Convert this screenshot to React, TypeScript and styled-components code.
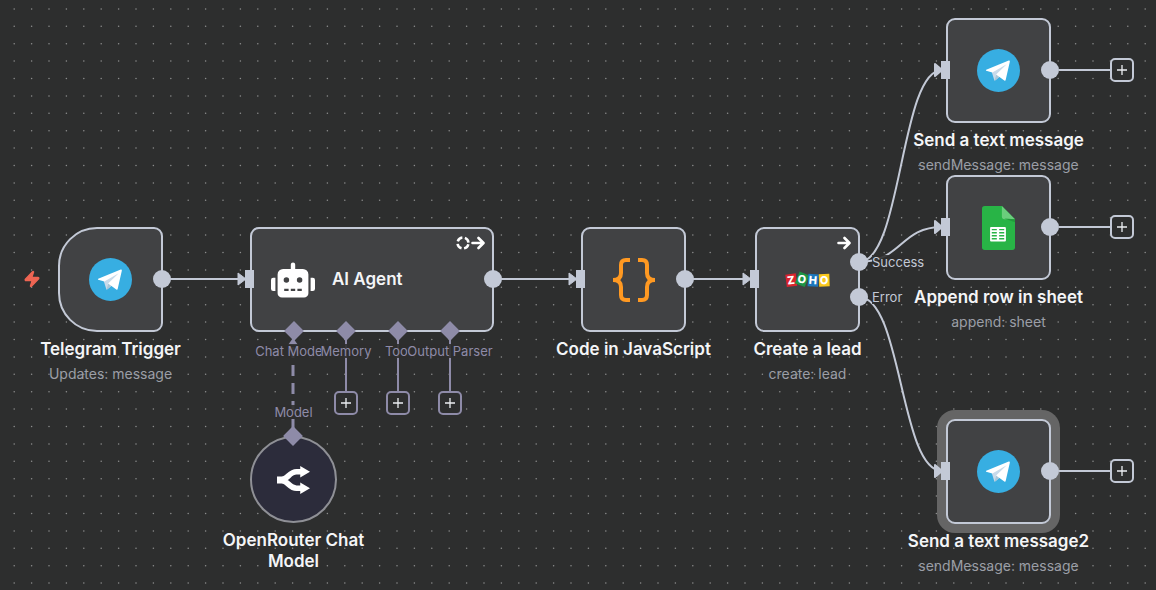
import React from "react";
import styled, { createGlobalStyle, css } from "styled-components";
import { FaRobot } from "react-icons/fa";
import { Zap } from "lucide-react";

const color = {
  canvas: "#2d2e2e",
  node: "#414244",
  line: "#c3c9d6",
  sub: "#8e8ba8",
  title: "#f4f5f7",
  subtitle: "#9b9ea6",
};

const GlobalStyle = createGlobalStyle`
  * { box-sizing: border-box; }
  body {
    margin: 0;
    background: ${color.canvas};
    font-family: Inter, "Liberation Sans", sans-serif;
  }
`;

const Canvas = styled.main`
  position: relative;
  min-height: 100vh;
  overflow: hidden;
  background: ${color.canvas};
`;

const Layer = styled.svg`
  position: absolute;
  inset: 0;
  width: 100%;
  height: 100%;
`;

/* A node's place on the free canvas */
const Node = styled.section<{ $x: number; $y: number; $w?: number }>`
  position: absolute;
  left: ${(p) => p.$x}px;
  top: ${(p) => p.$y}px;
  width: ${(p) => p.$w ?? 105}px;
  display: flex;
  flex-direction: column;
  align-items: center;
`;

type Shape = "box" | "trigger" | "circle";

const Body = styled.div<{ $shape?: Shape; $selected?: boolean; $wide?: boolean }>`
  position: relative;
  display: flex;
  align-items: center;
  justify-content: center;
  width: 100%;
  height: 105px;
  background: ${color.node};
  border: 2px solid ${color.line};
  border-radius: 9px;
  ${(p) => p.$shape === "trigger" && css`border-radius: 39px 9px 9px 39px;`}
  ${(p) =>
    p.$shape === "circle" &&
    css`
      height: 87px;
      border-radius: 50%;
      border-color: #8f9096;
      background: #2c2c3b;
    `}
  ${(p) => p.$selected && css`box-shadow: 0 0 0 9px #656565;`}
  ${(p) =>
    p.$wide &&
    css`
      justify-content: flex-start;
      gap: 17px;
      padding-left: 19px;
    `}
`;

const Caption = styled.div`
  flex: none;
  width: 190px;
  margin-top: 7px;
  display: flex;
  flex-direction: column;
  gap: 5px;
  text-align: center;
`;

const Title = styled.h2`
  margin: 0;
  color: ${color.title};
  font-size: 17px;
  line-height: 21px;
  font-weight: 600;
`;

const Subtitle = styled.p`
  margin: 0;
  color: ${color.subtitle};
  font-size: 14px;
  line-height: 18px;
`;

/* Input handle, on the left border */
const Input = styled.i`
  position: absolute;
  left: -7px;
  top: 41px;
  width: 9px;
  height: 18px;
  background: ${color.line};
`;

/* Column of output handles over the right border */
const Outputs = styled.div`
  position: absolute;
  left: calc(100% - 8px);
  top: 0;
  height: 100px;
  display: flex;
  flex-direction: column;
  justify-content: center;
  gap: 17px;
`;

const Output = styled.div`
  display: flex;
  align-items: center;
  height: 18px;
`;

const Dot = styled.i`
  flex: none;
  width: 18px;
  height: 18px;
  border-radius: 50%;
  background: ${color.line};
`;

const Tail = styled.i`
  width: 51px;
  height: 2px;
  background: ${color.line};
`;

const Label = styled.span<{ $kind?: "main" | "required" }>`
  color: ${(p) => (p.$kind === "main" ? color.line : color.sub)};
  background: rgba(45, 46, 46, 0.9);
  font-size: 13px;
  line-height: 14px;
  white-space: nowrap;
  ${(p) => p.$kind === "main" && css`margin-left: 4px;`}
  ${(p) => p.$kind === "required" && css`padding-right: 7px;`}
`;

const Diamond = styled.i`
  flex: none;
  width: 14px;
  height: 14px;
  transform: rotate(45deg);
  background: ${color.sub};
`;

/* Row of sub-node ports hanging from the bottom border */
const Ports = styled.div`
  position: absolute;
  left: 16px;
  top: 95px;
  display: grid;
  grid-template-columns: repeat(4, 52px);
`;

const Port = styled.div`
  display: flex;
  flex-direction: column;
  align-items: center;
  min-width: 0;
  gap: 6px;
`;

const TopPort = styled.div`
  position: absolute;
  bottom: calc(100% - 5px);
  display: flex;
  flex-direction: column;
  align-items: center;
  gap: 10px;
`;

const AddButton = styled.button<{ $sub?: boolean }>`
  flex: none;
  width: 24px;
  height: 24px;
  padding: 0;
  display: flex;
  align-items: center;
  justify-content: center;
  color: #eceef2;
  background: ${color.canvas};
  border: 2px solid ${(p) => (p.$sub ? color.sub : color.line)};
  border-radius: 5px;
  ${(p) => p.$sub && css`margin-top: 27px;`}
`;

const Corner = styled.div`
  position: absolute;
  top: 7px;
  right: 7px;
  display: flex;
  gap: 1px;
`;

const TriggerMark = styled.div`
  position: absolute;
  right: calc(100% + 19px);
  display: flex;
  padding-bottom: 2px;
`;

const Telegram = () => (
  <svg width="43" height="43" viewBox="0 0 126 126" aria-label="Telegram">
    <circle cx="63" cy="63" r="63" fill="#37aee2" />
    <path d="M43 67 L51 92 Q53 93 55 91 L66 81 L96 35 Z" fill="#c8daea" />
    <path d="M51 92 Q53 93 55 91 L66 81 L57 75 Z" fill="#a9c6d8" />
    <path
      d="M27 61 L93 34 Q97 33 96 38 L84 91 Q83 94 80 92 L56 75 L87 45 L45 69 L27 64 Q25 62 27 61 Z"
      fill="#fff"
    />
  </svg>
);

const Braces = () => (
  <svg width="44" height="44" viewBox="0 0 44 44" fill="none" stroke="#ff9922" strokeWidth="4" aria-label="Code">
    <path d="M18 2 H14 Q9 2 9 7 V15 Q9 22 1 22 Q9 22 9 29 V37 Q9 42 14 42 H18" />
    <path d="M26 2 H30 Q35 2 35 7 V15 Q35 22 43 22 Q35 22 35 29 V37 Q35 42 30 42 H26" />
  </svg>
);

const tiles = [
  { x: 6, y: 9, r: -7, fill: "#d9232e", letter: "Z" },
  { x: 17, y: 8, r: 22, fill: "#1d9445", letter: "O" },
  { x: 28, y: 9, r: 4, fill: "#1c77bd", letter: "H" },
  { x: 39, y: 9, r: -2, fill: "#fbc91d", letter: "O" },
];

const Zoho = () => (
  <svg width="46" height="18" viewBox="0 0 46 18" aria-label="Zoho">
    {tiles.map((t, i) => (
      <g key={i} transform={`translate(${t.x} ${t.y}) rotate(${t.r})`}>
        <rect x="-5" y="-6" width="10.500" height="12.500" fill={t.fill} />
        <text
          y="4"
          fill="#fff"
          fontSize="11"
          fontWeight="800"
          textAnchor="middle"
          transform={t.r > 10 ? "rotate(-12)" : undefined}
        >
          {t.letter}
        </text>
      </g>
    ))}
  </svg>
);

const Sheets = () => (
  <svg width="33" height="44" viewBox="0 0 98 130" aria-label="Google Sheets">
    <path d="M8 0 H59 L98 39 V122 Q98 130 90 130 H8 Q0 130 0 122 V8 Q0 0 8 0 Z" fill="#28b446" />
    <path d="M59 0 L98 39 H67 Q59 39 59 31 Z" fill="#6ace7c" />
    <path d="M66 37 L98 48 V39 Z" fill="#219b3b" />
    <rect x="24" y="62" width="47" height="43" rx="3" fill="#fff" />
    <path d="M29 70 H44 M51 70 H66 M29 79 H44 M51 79 H66 M29 88 H44 M51 88 H66 M29 97 H44 M51 97 H66" stroke="#28b446" strokeWidth="4" />
  </svg>
);

const Router = () => (
  <svg width="33" height="28" viewBox="0 0 98 83" aria-label="OpenRouter">
    <path
      d="M0 41.500 H10 C32 41 36 17 58 17 H72 M10 41.500 C32 42 36 66 58 66 H72"
      fill="none"
      stroke="#fff"
      strokeWidth="17"
    />
    <path d="M0 31 H22 V52 H0 Z M69 0 L98 17 L69 34 Z M69 49 L98 66 L69 83 Z" fill="#fff" />
  </svg>
);

const ArrowMark = () => (
  <svg width="14" height="14" viewBox="0 0 14 14" fill="none" stroke="#fff" strokeWidth="2.600" strokeLinecap="round" strokeLinejoin="round">
    <path d="M1.500 7 H12 M7.500 2 L12.500 7 L7.500 12" />
  </svg>
);

const RetryMark = () => (
  <svg width="14" height="14" viewBox="0 0 14 14" fill="none" stroke="#fff" strokeWidth="2.500">
    <circle cx="7" cy="7" r="5.500" strokeDasharray="6 2.640" strokeDashoffset="-1.300" />
  </svg>
);

const PlusMark = () => (
  <svg width="12" height="12" viewBox="0 0 12 12" stroke="currentColor" strokeWidth="1.300">
    <path d="M6 1 V11 M1 6 H11" />
  </svg>
);

const dotSteps = [0, 1, 2, 3, 4];

const Edges = () => (
  <Layer aria-hidden="true">
    <defs>
      <pattern id="dots" x="5" y="0" width="87" height="87" patternUnits="userSpaceOnUse">
        {dotSteps.map((r) =>
          dotSteps.map((c) => (
            <circle key={`${r}-${c}`} cx={9.2 + c * 17.4} cy={8.9 + r * 17.4} r="0.750" fill="#8d8e8e" />
          )),
        )}
      </pattern>
      <marker id="arrow" viewBox="0 0 9 14" refX="8" refY="7" markerWidth="9" markerHeight="14" markerUnits="userSpaceOnUse">
        <path d="M1 1 L9 7 L1 13 Z" fill={color.line} stroke={color.line} strokeLinejoin="round" />
      </marker>
    </defs>
    <rect width="100%" height="100%" fill="url(#dots)" />
    <g fill="none" stroke={color.line} strokeWidth="2">
      <path d="M163 279 H245" markerEnd="url(#arrow)" />
      <path d="M493 279 H576" markerEnd="url(#arrow)" />
      <path d="M685 279 H750" markerEnd="url(#arrow)" />
      <path d="M859 262 C902 262 900 70 942 70" />
      <path d="M859 262 C902 262 900 227 942 227" />
      <path d="M859 297 C902 297 900 471 942 471" />
    </g>
    <g stroke={color.sub} strokeWidth="2">
      <path d="M346 336 V392 M398 336 V392 M450 336 V392" />
      <path d="M293 347 V436" strokeDasharray="11 7" strokeWidth="3" />
      <path d="M288 345 L293 338 L298 345 Z" fill={color.sub} stroke="none" />
    </g>
  </Layer>
);

const ArrowHeads = () => (
  <Layer aria-hidden="true" pointerEvents="none">
    {[70, 227, 471].map((y) => (
      <path key={y} d={`M935 ${y - 6} L942 ${y} L935 ${y + 6} Z`} fill={color.line} stroke={color.line} strokeLinejoin="round" strokeWidth="2" />
    ))}
  </Layer>
);

const NodeCaption = ({ title, subtitle }: { title: string; subtitle?: string }) => (
  <Caption>
    <Title>{title}</Title>
    {subtitle && <Subtitle>{subtitle}</Subtitle>}
  </Caption>
);

const NodeOutputs = ({ labels = [""] }: { labels?: string[] }) => (
  <Outputs>
    {labels.map((label) => (
      <Output key={label}>
        <Dot />
        {label && <Label $kind="main">{label}</Label>}
      </Output>
    ))}
  </Outputs>
);

const ports = [
  { label: "Chat Model", connected: true },
  { label: "Memory" },
  { label: "Tool" },
  { label: "Output Parser" },
];

const actions = [
  { y: 18, title: "Send a text message", subtitle: "sendMessage: message", icon: <Telegram /> },
  { y: 175, title: "Append row in sheet", subtitle: "append: sheet", icon: <Sheets /> },
  { y: 419, title: "Send a text message2", subtitle: "sendMessage: message", icon: <Telegram />, selected: true },
];

export default function App() {
  return (
    <>
      <GlobalStyle />
      <Canvas>
        <Edges />

        <Node $x={58} $y={227}>
          <Body $shape="trigger">
            <TriggerMark>
              <Zap size={18} color="#ee6553" fill="#ee6553" />
            </TriggerMark>
            <Telegram />
            <NodeOutputs />
          </Body>
          <NodeCaption title="Telegram Trigger" subtitle="Updates: message" />
        </Node>

        <Node $x={250} $y={227} $w={244}>
          <Body $wide>
            <Input />
            <FaRobot size={44} color="#fff" />
            <Title>AI Agent</Title>
            <Corner>
              <RetryMark />
              <ArrowMark />
            </Corner>
            <NodeOutputs />
            <Ports>
              {ports.map((p) => (
                <Port key={p.label}>
                  <Diamond />
                  <Label $kind={p.connected ? "required" : undefined}>{p.label}</Label>
                  {!p.connected && (
                    <AddButton $sub aria-label={`Add ${p.label}`}>
                      <PlusMark />
                    </AddButton>
                  )}
                </Port>
              ))}
            </Ports>
          </Body>
        </Node>

        <Node $x={250} $y={436} $w={87}>
          <Body $shape="circle">
            <Router />
            <TopPort>
              <Label>Model</Label>
              <Diamond />
            </TopPort>
          </Body>
          <NodeCaption title="OpenRouter Chat Model" />
        </Node>

        <Node $x={581} $y={227}>
          <Body>
            <Input />
            <Braces />
            <NodeOutputs />
          </Body>
          <NodeCaption title="Code in JavaScript" />
        </Node>

        <Node $x={755} $y={227}>
          <Body>
            <Input />
            <Zoho />
            <Corner>
              <ArrowMark />
            </Corner>
            <NodeOutputs labels={["Success", "Error"]} />
          </Body>
          <NodeCaption title="Create a lead" subtitle="create: lead" />
        </Node>

        {actions.map((a) => (
          <Node key={a.title} $x={946} $y={a.y}>
            <Body $selected={a.selected}>
              <Input />
              {a.icon}
              <Outputs>
                <Output>
                  <Dot />
                  <Tail />
                  <AddButton aria-label={`Add node after ${a.title}`}>
                    <PlusMark />
                  </AddButton>
                </Output>
              </Outputs>
            </Body>
            <NodeCaption title={a.title} subtitle={a.subtitle} />
          </Node>
        ))}
        <ArrowHeads />
      </Canvas>
    </>
  );
}
